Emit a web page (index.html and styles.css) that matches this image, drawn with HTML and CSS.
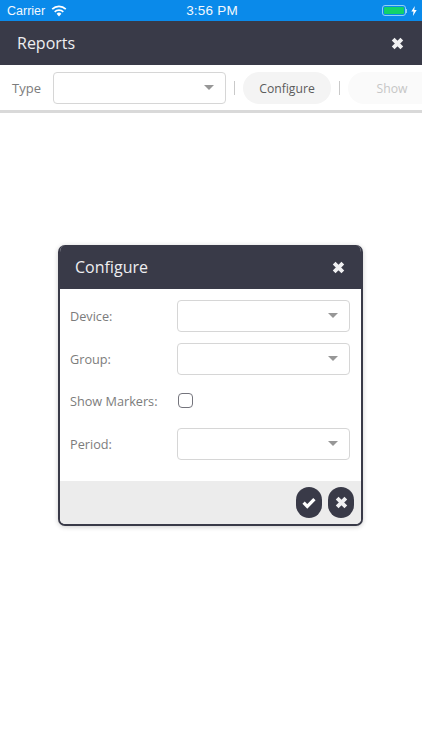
FILE: index.html
```html
<!DOCTYPE html>
<html lang="en">
<head>
    <meta charset="UTF-8">
    <meta name="viewport" content="width=device-width, initial-scale=1.0">
    <title>Reports</title>
    <link rel="stylesheet" href="styles.css">
</head>
<body>
    <!-- status bar -->
    <div class="status-bar">
        <div class="status-left">
            <span>Carrier</span>
            <svg class="wifi" width="16" height="12" viewBox="0 0 16 12">
                <path d="M8 11.5 5.6 8.8a3.4 3.4 0 0 1 4.8 0z" fill="#fff"/>
                <path d="M3.7 6.8a6.2 6.2 0 0 1 8.6 0" fill="none" stroke="#fff" stroke-width="1.7"/>
                <path d="M1.2 4.1a9.8 9.8 0 0 1 13.6 0" fill="none" stroke="#fff" stroke-width="1.7"/>
            </svg>
        </div>
        <div class="status-time">3:56 PM</div>
        <div class="status-right">
            <span class="battery"><span class="battery-fill"></span></span>
            <span class="battery-tip"></span>
            <svg width="6" height="10" viewBox="0 0 6 10"><path d="M3.8 0 0.3 5.6h2.2L1.9 10l3.8-6H3.3z" fill="#fff"/></svg>
        </div>
    </div>

    <header class="title-bar">
        <span class="title">Reports</span>
        <svg class="close-icon" width="13" height="13" viewBox="0 0 12 12"><path d="M2 2l8 8M10 2l-8 8"/></svg>
    </header>

    <div class="toolbar">
        <span class="type-label">Type</span>
        <div class="select select-type"><span class="caret"></span></div>
        <span class="divider"></span>
        <button class="pill">Configure</button>
        <span class="divider"></span>
        <button class="pill pill-disabled">Show</button>
    </div>

    <!-- configure dialog -->
    <section class="dialog">
        <div class="dialog-head">
            <span class="dialog-title">Configure</span>
            <svg class="close-icon" width="13" height="13" viewBox="0 0 12 12"><path d="M2 2l8 8M10 2l-8 8"/></svg>
        </div>
        <div class="dialog-body">
            <div class="field">
                <label>Device:</label>
                <div class="select"><span class="caret"></span></div>
            </div>
            <div class="field">
                <label>Group:</label>
                <div class="select"><span class="caret"></span></div>
            </div>
            <div class="field">
                <label>Show Markers:</label>
                <span class="checkbox"></span>
            </div>
            <div class="field">
                <label>Period:</label>
                <div class="select"><span class="caret"></span></div>
            </div>
        </div>
        <div class="dialog-foot">
            <button class="round-btn">
                <svg width="16" height="13" viewBox="0 0 14 12"><path d="M2 6.2l3.4 3.4L12 2.8" fill="none" stroke="#fff" stroke-width="3"/></svg>
            </button>
            <button class="round-btn">
                <svg class="close-icon" width="13" height="13" viewBox="0 0 12 12"><path d="M2 2l8 8M10 2l-8 8"/></svg>
            </button>
        </div>
    </section>
</body>
</html>
```

FILE: styles.css
```css
* {
    margin: 0;
    padding: 0;
    box-sizing: border-box;
}

body {
    position: relative;
    width: 422px;
    height: 750px;
    overflow: hidden;
    background: #fff;
    font-family: "Open Sans", sans-serif;
    color: #6e6e6e;
}

/* status bar */
.status-bar {
    height: 21px;
    padding: 0 5px 0 7px;
    display: flex;
    align-items: center;
    justify-content: space-between;
    background: #0a8aea;
    color: #f2f8fd;
    font-family: "Liberation Sans", sans-serif;
    font-size: 12.5px;
}

.status-left {
    width: 120px;
    display: flex;
    align-items: center;
    gap: 6px;
}

.status-time {
    font-size: 13.5px;
    letter-spacing: 0.2px;
}

.status-right {
    width: 120px;
    display: flex;
    align-items: center;
    justify-content: flex-end;
}

.battery {
    width: 24px;
    height: 11px;
    padding: 1px;
    border: 1px solid #8fd0f5;
    border-radius: 3px;
}

.battery-fill {
    display: block;
    height: 100%;
    background: #12d26a;
    border-radius: 1px;
}

.battery-tip {
    width: 1px;
    height: 4px;
    margin-right: 4px;
    background: #8fd0f5;
}

/* title bar */
.title-bar {
    height: 44px;
    padding: 0 18px 0 17px;
    display: flex;
    align-items: center;
    justify-content: space-between;
    background: #393a48;
    color: #eeeef0;
}

.title {
    font-size: 16px;
}

.close-icon path {
    fill: none;
    stroke: #f0f0f2;
    stroke-width: 3.6;
}

/* toolbar */
.toolbar {
    height: 48px;
    padding: 7px 0 6px 12px;
    display: flex;
    align-items: center;
    border-bottom: 3px solid #d9d9d9;
    overflow: hidden;
}

.type-label {
    width: 41px;
    flex-shrink: 0;
    font-size: 13px;
    color: #7c7c7c;
}

.select {
    position: relative;
    width: 173px;
    height: 32px;
    background: #fff;
    border: 1px solid #d6d6d6;
    border-radius: 4px;
}

.select-type {
    flex-shrink: 0;
}

.caret {
    position: absolute;
    top: 12px;
    right: 11px;
    width: 0;
    height: 0;
    border-left: 5.5px solid transparent;
    border-right: 5.5px solid transparent;
    border-top: 5.5px solid #979797;
}

.divider {
    width: 1px;
    height: 14px;
    margin: 0 8px;
    flex-shrink: 0;
    background: #c9c9c9;
}

.pill {
    width: 88px;
    height: 32px;
    flex-shrink: 0;
    border: none;
    border-radius: 16px;
    background: #f4f4f4;
    font-family: "Open Sans", sans-serif;
    font-size: 12.2px;
    color: #5c5c5c;
}

.pill-disabled {
    background: #fafafa;
    color: #c6c6c6;
}

/* dialog */
.dialog {
    position: absolute;
    left: 58px;
    top: 245px;
    width: 305px;
    height: 281px;
    display: flex;
    flex-direction: column;
    border: 2px solid #393a48;
    border-top: none;
    border-radius: 7px;
    background: #fff;
    box-shadow: 0 1px 5px rgba(0, 0, 0, 0.2);
    overflow: hidden;
}

.dialog-head {
    height: 44px;
    margin: 0 -2px;
    padding: 0 18px 0 17px;
    display: flex;
    flex-shrink: 0;
    align-items: center;
    justify-content: space-between;
    background: #393a48;
    color: #eeeef0;
    font-size: 16px;
}

.dialog-body {
    flex: 1;
    padding: 11px 10px 0;
    display: flex;
    flex-direction: column;
    gap: 10.5px;
}

.field {
    height: 32px;
    display: flex;
    align-items: center;
    font-size: 12.7px;
    color: #7c7c7c;
}

.field label {
    width: 107px;
}

.checkbox {
    width: 15px;
    height: 15px;
    margin: -2px 0 0 1px;
    border: 1.5px solid #74747c;
    border-radius: 4px;
}

.dialog-foot {
    height: 43px;
    padding: 6px 7px 5px;
    display: flex;
    flex-shrink: 0;
    justify-content: flex-end;
    gap: 6px;
    background: #ececec;
}

.round-btn {
    width: 26px;
    height: 31px;
    display: flex;
    align-items: center;
    justify-content: center;
    border: none;
    border-radius: 13px;
    background: #393a48;
}
```
